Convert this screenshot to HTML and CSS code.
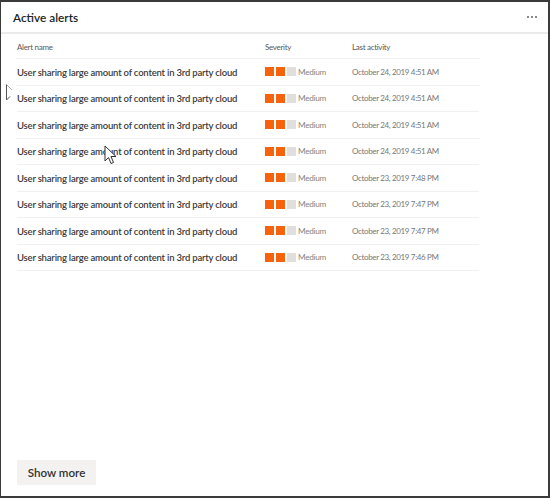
FILE: index.html
```html
<!DOCTYPE html>
<html>
<head>
<meta charset="utf-8">
<link rel="stylesheet" href="styles.css">
</head>
<body>
<div class="card">
  <div class="header">
    <div class="title">Active alerts</div>
    <div class="more"><span></span><span></span><span></span></div>
  </div>
  <div class="table">
    <div class="row head">
      <div>Alert name</div>
      <div>Severity</div>
      <div>Last activity</div>
    </div>
    <div class="row">
      <div class="name">User sharing large amount of content in 3rd party cloud</div>
      <div class="sev"><span class="sq on"></span><span class="sq on"></span><span class="sq"></span><span class="lvl">Medium</span></div>
      <div class="date">October 24, 2019 4:51 AM</div>
    </div>
    <div class="row">
      <div class="name">User sharing large amount of content in 3rd party cloud</div>
      <div class="sev"><span class="sq on"></span><span class="sq on"></span><span class="sq"></span><span class="lvl">Medium</span></div>
      <div class="date">October 24, 2019 4:51 AM</div>
    </div>
    <div class="row">
      <div class="name">User sharing large amount of content in 3rd party cloud</div>
      <div class="sev"><span class="sq on"></span><span class="sq on"></span><span class="sq"></span><span class="lvl">Medium</span></div>
      <div class="date">October 24, 2019 4:51 AM</div>
    </div>
    <div class="row">
      <div class="name">User sharing large amount of content in 3rd party cloud</div>
      <div class="sev"><span class="sq on"></span><span class="sq on"></span><span class="sq"></span><span class="lvl">Medium</span></div>
      <div class="date">October 24, 2019 4:51 AM</div>
    </div>
    <div class="row">
      <div class="name">User sharing large amount of content in 3rd party cloud</div>
      <div class="sev"><span class="sq on"></span><span class="sq on"></span><span class="sq"></span><span class="lvl">Medium</span></div>
      <div class="date">October 23, 2019 7:48 PM</div>
    </div>
    <div class="row">
      <div class="name">User sharing large amount of content in 3rd party cloud</div>
      <div class="sev"><span class="sq on"></span><span class="sq on"></span><span class="sq"></span><span class="lvl">Medium</span></div>
      <div class="date">October 23, 2019 7:47 PM</div>
    </div>
    <div class="row">
      <div class="name">User sharing large amount of content in 3rd party cloud</div>
      <div class="sev"><span class="sq on"></span><span class="sq on"></span><span class="sq"></span><span class="lvl">Medium</span></div>
      <div class="date">October 23, 2019 7:47 PM</div>
    </div>
    <div class="row">
      <div class="name">User sharing large amount of content in 3rd party cloud</div>
      <div class="sev"><span class="sq on"></span><span class="sq on"></span><span class="sq"></span><span class="lvl">Medium</span></div>
      <div class="date">October 23, 2019 7:46 PM</div>
    </div>
  </div>
  <div class="footer">
    <button class="btn">Show more</button>
  </div>
  <svg class="cursor cursor-a" width="10" height="20" viewBox="0 0 10 20"><path d="M1.5 1.5 L1.5 17 L5 13.5" fill="none" stroke="#555" stroke-width="1"/><path d="M1.5 1.5 L7 7" fill="none" stroke="#999" stroke-width="0.8"/></svg>
  <svg class="cursor cursor-b" width="16" height="22" viewBox="0 0 16 22"><path d="M1 1 L1 16 L4.5 12.5 L7 18.5 L9.5 17.5 L7 11.5 L12 11.5 Z" fill="#fff" stroke="#333" stroke-width="1" stroke-linejoin="round"/></svg>
</div>
</body>
</html>
```
FILE: styles.css
```css
html, body {
  margin: 0;
  padding: 0;
  background: #fff;
}
body {
  font-family: "Lato", "Open Sans", sans-serif;
  color: #323130;
}
.card {
  position: relative;
  width: 550px;
  height: 498px;
  box-sizing: border-box;
  border: 2px solid #3b3b3b;
  border-left-width: 1px;
  display: flex;
  flex-direction: column;
  background: #fff;
}
.header {
  height: 30px;
  display: flex;
  align-items: center;
  justify-content: space-between;
  padding: 0 11px 0 12px;
  border-bottom: 2px solid #ebebeb;
}
.title {
  font-size: 11.8px;
  font-weight: 600;
  color: #201f1e;
  padding-top: 1px;
}
.more {
  display: flex;
  gap: 2px;
  margin-top: -1px;
}
.more span {
  width: 2px;
  height: 2px;
  background: #8a8886;
}
.table {
  margin-left: 16px;
  width: 462px;
}
.row {
  display: grid;
  grid-template-columns: 248px 87px 1fr;
  align-items: center;
  height: 26.5px;
  box-sizing: border-box;
  border-bottom: 1px solid #f0f0f0;
}
.row.head {
  height: 25px;
  padding-top: 2px;
  font-size: 8px;
  letter-spacing: -0.3px;
  color: #5a5856;
}
.name {
  font-size: 9.5px;
  font-weight: 600;
  letter-spacing: -0.2px;
  color: #3b3a39;
  white-space: nowrap;
  padding-top: 1px;
}
.sev {
  display: flex;
  align-items: center;
}
.sq {
  width: 9px;
  height: 9px;
  background: #e1dfdd;
  margin-right: 2px;
}
.sq.on {
  background: #f7630c;
}
.lvl {
  margin-left: 0;
  font-size: 8.2px;
  letter-spacing: -0.3px;
  color: #868482;
}
.date {
  font-size: 8px;
  letter-spacing: -0.35px;
  color: #797775;
}
.footer {
  margin-top: auto;
  padding: 0 0 11px 16px;
}
.btn {
  width: 79px;
  height: 25px;
  border: none;
  background: #f3f2f1;
  font-family: "Lato", "Open Sans", sans-serif;
  font-size: 11.6px;
  font-weight: 600;
  color: #323130;
  padding: 0;
}
.cursor {
  position: absolute;
}
.cursor-a {
  left: 4px;
  top: 81px;
}
.cursor-b {
  left: 103px;
  top: 143px;
}
```
